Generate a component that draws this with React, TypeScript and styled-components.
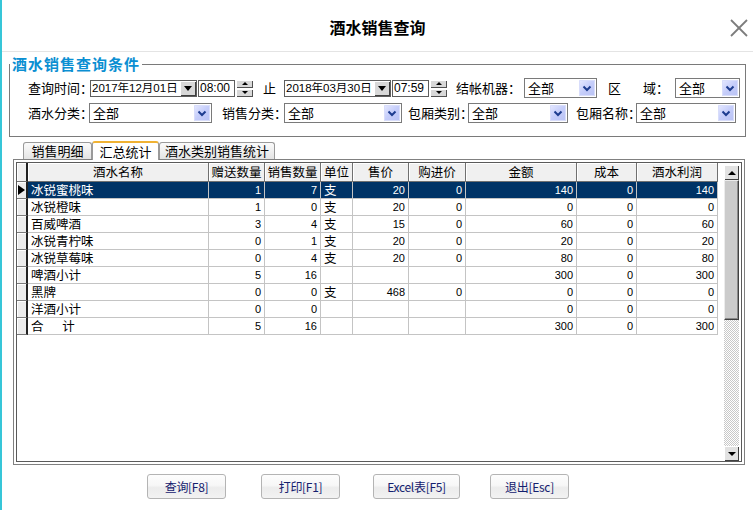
import React from 'react'
import styled, { createGlobalStyle, css } from 'styled-components'

const GlobalStyle = createGlobalStyle`
  html, body {
    margin: 0;
    padding: 0;
    background: #fff;
  }
  body {
    font-family: "Noto Sans CJK SC", "Liberation Sans", sans-serif;
    color: #000;
  }
  * {
    box-sizing: border-box;
  }
`

const COLS = '11px 181px 56px 56px 32px 56px 57px 111px 60px 81px'

const Window = styled.div`
  width: 753px;
  height: 510px;
  border-left: 2px solid #36c6d8;
  background: #fff;
  display: flex;
  flex-direction: column;
  overflow: hidden;
`

const TitleBar = styled.div`
  height: 52px;
  border-bottom: 1px solid #e4e4e4;
  display: grid;
  grid-template-columns: 1fr auto 1fr;
  align-items: center;
`

const Title = styled.div`
  grid-column: 2;
  font-size: 16px;
  font-weight: bold;
  line-height: 20px;
  padding-top: 2px;
`

const CloseButton = styled.div`
  justify-self: end;
  margin-right: 5px;
  padding-top: 4px;
  display: flex;
`

const Body = styled.div`
  padding: 3px 7px 0 7px;
  display: flex;
  flex-direction: column;
`

const Group = styled.fieldset`
  margin: 0;
  padding: 0;
  width: 737px;
  border: 1px solid #7a7a7a;
  min-inline-size: 0;
`

const Legend = styled.legend`
  padding: 0 2px;
  margin-left: 0;
  font-size: 15px;
  font-weight: bold;
  line-height: 18px;
  color: #0b8fd2;
  letter-spacing: 1px;
`

const Rows = styled.div`
  padding: 5px 0 13px 18px;
  display: flex;
  flex-direction: column;
  gap: 5px;
`

const FormRow = styled.div`
  display: flex;
  align-items: center;
  height: 20px;
`

const Label = styled.span<{ $w: number; $ml?: number }>`
  width: ${p => p.$w}px;
  margin-left: ${p => p.$ml ?? 0}px;
  font-size: 13px;
  line-height: 20px;
  white-space: nowrap;
  flex-shrink: 0;
`

const DateBox = styled.div<{ $w: number; $ml?: number }>`
  width: ${p => p.$w}px;
  margin-left: ${p => p.$ml ?? 0}px;
  height: 17px;
  border: 1px solid #5e5e5e;
  display: flex;
  flex-shrink: 0;
  background: #fff;
`

const DateText = styled.span`
  flex: 1;
  font-family: "Liberation Sans", "Noto Sans CJK SC", sans-serif;
  font-size: 11.5px;
  line-height: 15px;
  padding-left: 1px;
  white-space: nowrap;
`

const DropBtn = styled.span`
  width: 16px;
  height: 15px;
  background: #d8d8d8;
  box-shadow: inset 1px 1px 0 #fff, inset -1px -1px 0 #404040;
  display: flex;
  align-items: center;
  justify-content: center;
  &::after {
    content: '';
    border-left: 4px solid transparent;
    border-right: 4px solid transparent;
    border-top: 5px solid #000;
  }
`

const TimeBox = styled.div`
  width: 37px;
  margin-left: 1px;
  height: 17px;
  border: 1px solid #5e5e5e;
  font-family: "Liberation Sans", sans-serif;
  font-size: 12px;
  line-height: 15px;
  padding-left: 1px;
  flex-shrink: 0;
`

const Spinner = styled.div`
  width: 17px;
  height: 17px;
  margin-left: 1px;
  display: flex;
  flex-direction: column;
  gap: 1px;
  flex-shrink: 0;
`

const SpinHalf = styled.span<{ $up?: boolean }>`
  flex: 1;
  background: #d8d8d8;
  box-shadow: inset 1px 1px 0 #fff, inset -1px -1px 0 #505050;
  display: flex;
  align-items: center;
  justify-content: center;
  &::after {
    content: '';
    border-left: 3px solid transparent;
    border-right: 3px solid transparent;
    ${p =>
      p.$up
        ? css`border-bottom: 3px solid #000;`
        : css`border-top: 3px solid #000;`}
  }
`

const Combo = styled.div<{ $w: number; $ml?: number }>`
  width: ${p => p.$w}px;
  margin-left: ${p => p.$ml ?? 0}px;
  height: 20px;
  border: 1px solid #7a7a7a;
  display: flex;
  align-items: center;
  flex-shrink: 0;
  background: #fff;
`

const ComboText = styled.span`
  flex: 1;
  font-size: 13px;
  line-height: 18px;
  padding-left: 3px;
`

const ComboBtn = styled.span`
  width: 16px;
  height: 16px;
  margin-right: 1px;
  border-radius: 1px;
  background: linear-gradient(135deg, #e6e9ff 0%, #c5cdfa 50%, #b9c2f4 100%);
  box-shadow: inset 0 0 0 1px #d8ddfb;
  display: flex;
  align-items: center;
  justify-content: center;
`

const TabBar = styled.div`
  margin: 4px 0 0 4px;
  padding-left: 10px;
  height: 18px;
  display: flex;
  align-items: flex-end;
  position: relative;
  z-index: 1;
`

const Tab = styled.div<{ $w: number; $active?: boolean }>`
  width: ${p => p.$w}px;
  height: 17px;
  border: 1px solid #9a9a9a;
  border-bottom: none;
  border-radius: 3px 3px 0 0;
  background: linear-gradient(#fbfbfb, #e4e4e4);
  font-size: 13px;
  line-height: 16px;
  text-align: center;
  white-space: nowrap;
  ${p =>
    p.$active &&
    css`
      height: 19px;
      margin-bottom: -1px;
      background: #fff;
      border-top: 2px solid #f0b233;
      line-height: 17px;
    `}
`

const Panel = styled.div`
  margin-left: 4px;
  width: 732px;
  height: 306px;
  border: 1px solid #808080;
  padding: 2px;
`

const Grid = styled.div`
  height: 100%;
  border: 1px solid #5a5a5a;
  display: flex;
  background: #fff;
`

const TableArea = styled.div`
  width: 701px;
  display: flex;
  flex-direction: column;
`

const HeaderRow = styled.div`
  display: grid;
  grid-template-columns: ${COLS};
  height: 19px;
`

const HeadCell = styled.div<{ $indicator?: boolean }>`
  background: #f0f0f0;
  border-right: 1px solid #707070;
  border-bottom: 1px solid #707070;
  box-shadow: inset 1px 1px 0 #fff;
  font-size: 12.5px;
  line-height: 18px;
  text-align: center;
  white-space: nowrap;
  ${p => p.$indicator && css`border-right: 2px solid #222;`}
`

const DataRow = styled.div<{ $selected?: boolean }>`
  display: grid;
  grid-template-columns: ${COLS};
  height: 17px;
  background: ${p => (p.$selected ? '#003366' : '#fff')};
  color: ${p => (p.$selected ? '#fff' : '#000')};
`

const Indicator = styled.div`
  background: #ececec;
  border-right: 2px solid #222;
  border-bottom: 1px solid #7a7a7a;
  box-shadow: inset 1px 1px 0 #fff;
  display: flex;
  align-items: center;
  padding-left: 1px;
`

const Cell = styled.div<{ $num?: boolean }>`
  border-right: 1px solid #c4c4c4;
  border-bottom: 1px solid #c4c4c4;
  padding: 0 3px;
  white-space: pre;
  ${p =>
    p.$num
      ? css`
          text-align: right;
          font-family: "Liberation Sans", sans-serif;
          font-size: 11px;
          line-height: 16px;
        `
      : css`
          text-align: left;
          font-size: 12.5px;
          line-height: 16px;
        `}
`

const Scrollbar = styled.div`
  width: 15px;
  margin: 2px 1px 0 6px;
  display: flex;
  flex-direction: column;
`

const ScrollBtn = styled.div<{ $up?: boolean }>`
  height: 15px;
  background: #e2e2e2;
  box-shadow: inset 1px 1px 0 #fff, inset -1px -1px 0 #404040;
  display: flex;
  align-items: center;
  justify-content: center;
  &::after {
    content: '';
    border-left: 4px solid transparent;
    border-right: 4px solid transparent;
    ${p =>
      p.$up
        ? css`border-bottom: 4px solid #000;`
        : css`border-top: 4px solid #000;`}
  }
`

const Thumb = styled.div`
  height: 140px;
  background: #cbcbcb;
  border: 1px solid #ececec;
  border-right-color: #404040;
  border-bottom-color: #404040;
  box-shadow: inset -1px -1px 0 #8a8a8a;
`

const Track = styled.div`
  flex: 1;
  background: repeating-conic-gradient(#ffffff 0 25%, #c8c8c8 0 50%) 0 0 / 2px 2px;
`

const ButtonRow = styled.div`
  margin-top: 9px;
  padding-left: 138px;
  display: flex;
`

const ActionButton = styled.button<{ $w: number; $ml?: number }>`
  width: ${p => p.$w}px;
  margin-left: ${p => p.$ml ?? 0}px;
  height: 25px;
  border: 1px solid #b4b4b4;
  border-radius: 3px;
  background: linear-gradient(#fdfdfd 0%, #f7f7f7 45%, #ececec 55%, #f2f2f2 100%);
  font-family: "Noto Sans CJK SC", "Liberation Sans", sans-serif;
  font-size: 12px;
  color: #14206e;
  padding: 0;
  letter-spacing: -0.3px;
`

type Item = [string, string, string, string, string, string, string, string, string]

const rows: Item[] = [
  ['冰锐蜜桃味', '1', '7', '支', '20', '0', '140', '0', '140'],
  ['冰锐橙味', '1', '0', '支', '20', '0', '0', '0', '0'],
  ['百威啤酒', '3', '4', '支', '15', '0', '60', '0', '60'],
  ['冰锐青柠味', '0', '1', '支', '20', '0', '20', '0', '20'],
  ['冰锐草莓味', '0', '4', '支', '20', '0', '80', '0', '80'],
  ['啤酒小计', '5', '16', '', '', '', '300', '0', '300'],
  ['黑牌', '0', '0', '支', '468', '0', '0', '0', '0'],
  ['洋酒小计', '0', '0', '', '', '', '0', '0', '0'],
  ['合\u3000\u2002计', '5', '16', '', '', '', '300', '0', '300']
]

const headers = ['酒水名称', '赠送数量', '销售数量', '单位', '售价', '购进价', '金额', '成本', '酒水利润']

function Chevron() {
  return (
    <svg width="10" height="7" viewBox="0 0 10 7">
      <polyline points="1.5,1.5 5,5 8.5,1.5" fill="none" stroke="#1d3c8f" strokeWidth="2" />
    </svg>
  )
}

function Select({ w, ml }: { w: number; ml?: number }) {
  return (
    <Combo $w={w} $ml={ml}>
      <ComboText>全部</ComboText>
      <ComboBtn>
        <Chevron />
      </ComboBtn>
    </Combo>
  )
}

function DateTime({ date, time, ml }: { date: string; time: string; ml?: number }) {
  return (
    <>
      <DateBox $w={107} $ml={ml}>
        <DateText>{date}</DateText>
        <DropBtn />
      </DateBox>
      <TimeBox>{time}</TimeBox>
      <Spinner>
        <SpinHalf $up />
        <SpinHalf />
      </Spinner>
    </>
  )
}

export default function App() {
  return (
    <>
      <GlobalStyle />
      <Window>
        <TitleBar>
          <Title>酒水销售查询</Title>
          <CloseButton>
            <svg width="18" height="18" viewBox="0 0 18 18">
              <line x1="1" y1="1" x2="17" y2="17" stroke="#7c7c7c" strokeWidth="1.8" />
              <line x1="17" y1="1" x2="1" y2="17" stroke="#7c7c7c" strokeWidth="1.8" />
            </svg>
          </CloseButton>
        </TitleBar>
        <Body>
          <Group>
            <Legend>酒水销售查询条件</Legend>
            <Rows>
              <FormRow>
                <Label $w={62}>查询时间：</Label>
                <DateTime date="2017年12月01日" time="08:00" />
                <Label $w={21} $ml={10}>止</Label>
                <DateTime date="2018年03月30日" time="07:59" />
                <Label $w={68} $ml={9}>结帐机器：</Label>
                <Select w={73} />
                <Label $w={13} $ml={11}>区</Label>
                <Label $w={32} $ml={22}>域：</Label>
                <Select w={65} />
              </FormRow>
              <FormRow>
                <Label $w={61}>酒水分类：</Label>
                <Select w={123} />
                <Label $w={62} $ml={10}>销售分类：</Label>
                <Select w={118} />
                <Label $w={60} $ml={6}>包厢类别：</Label>
                <Select w={100} />
                <Label $w={60} $ml={8}>包厢名称：</Label>
                <Select w={100} />
              </FormRow>
            </Rows>
          </Group>

          <TabBar>
            <Tab $w={69}>销售明细</Tab>
            <Tab $w={67} $active>汇总统计</Tab>
            <Tab $w={116}>酒水类别销售统计</Tab>
          </TabBar>
          <Panel>
            <Grid>
              <TableArea>
                <HeaderRow>
                  <HeadCell $indicator />
                  {headers.map(h => (
                    <HeadCell key={h}>{h}</HeadCell>
                  ))}
                </HeaderRow>
                {rows.map((r, i) => (
                  <DataRow key={i} $selected={i === 0}>
                    <Indicator>
                      {i === 0 && (
                        <svg width="7" height="10" viewBox="0 0 7 10">
                          <polygon points="0,0 7,5 0,10" fill="#000" />
                        </svg>
                      )}
                    </Indicator>
                    {r.map((v, j) => (
                      <Cell key={j} $num={j !== 0 && j !== 3}>
                        {v}
                      </Cell>
                    ))}
                  </DataRow>
                ))}
              </TableArea>
              <Scrollbar>
                <ScrollBtn $up />
                <Thumb />
                <Track />
                <ScrollBtn />
              </Scrollbar>
            </Grid>
          </Panel>

          <ButtonRow>
            <ActionButton $w={79}>查询[F8]</ActionButton>
            <ActionButton $w={79} $ml={35}>打印[F1]</ActionButton>
            <ActionButton $w={87} $ml={33}>Excel表[F5]</ActionButton>
            <ActionButton $w={79} $ml={30}>退出[Esc]</ActionButton>
          </ButtonRow>
        </Body>
      </Window>
    </>
  )
}
